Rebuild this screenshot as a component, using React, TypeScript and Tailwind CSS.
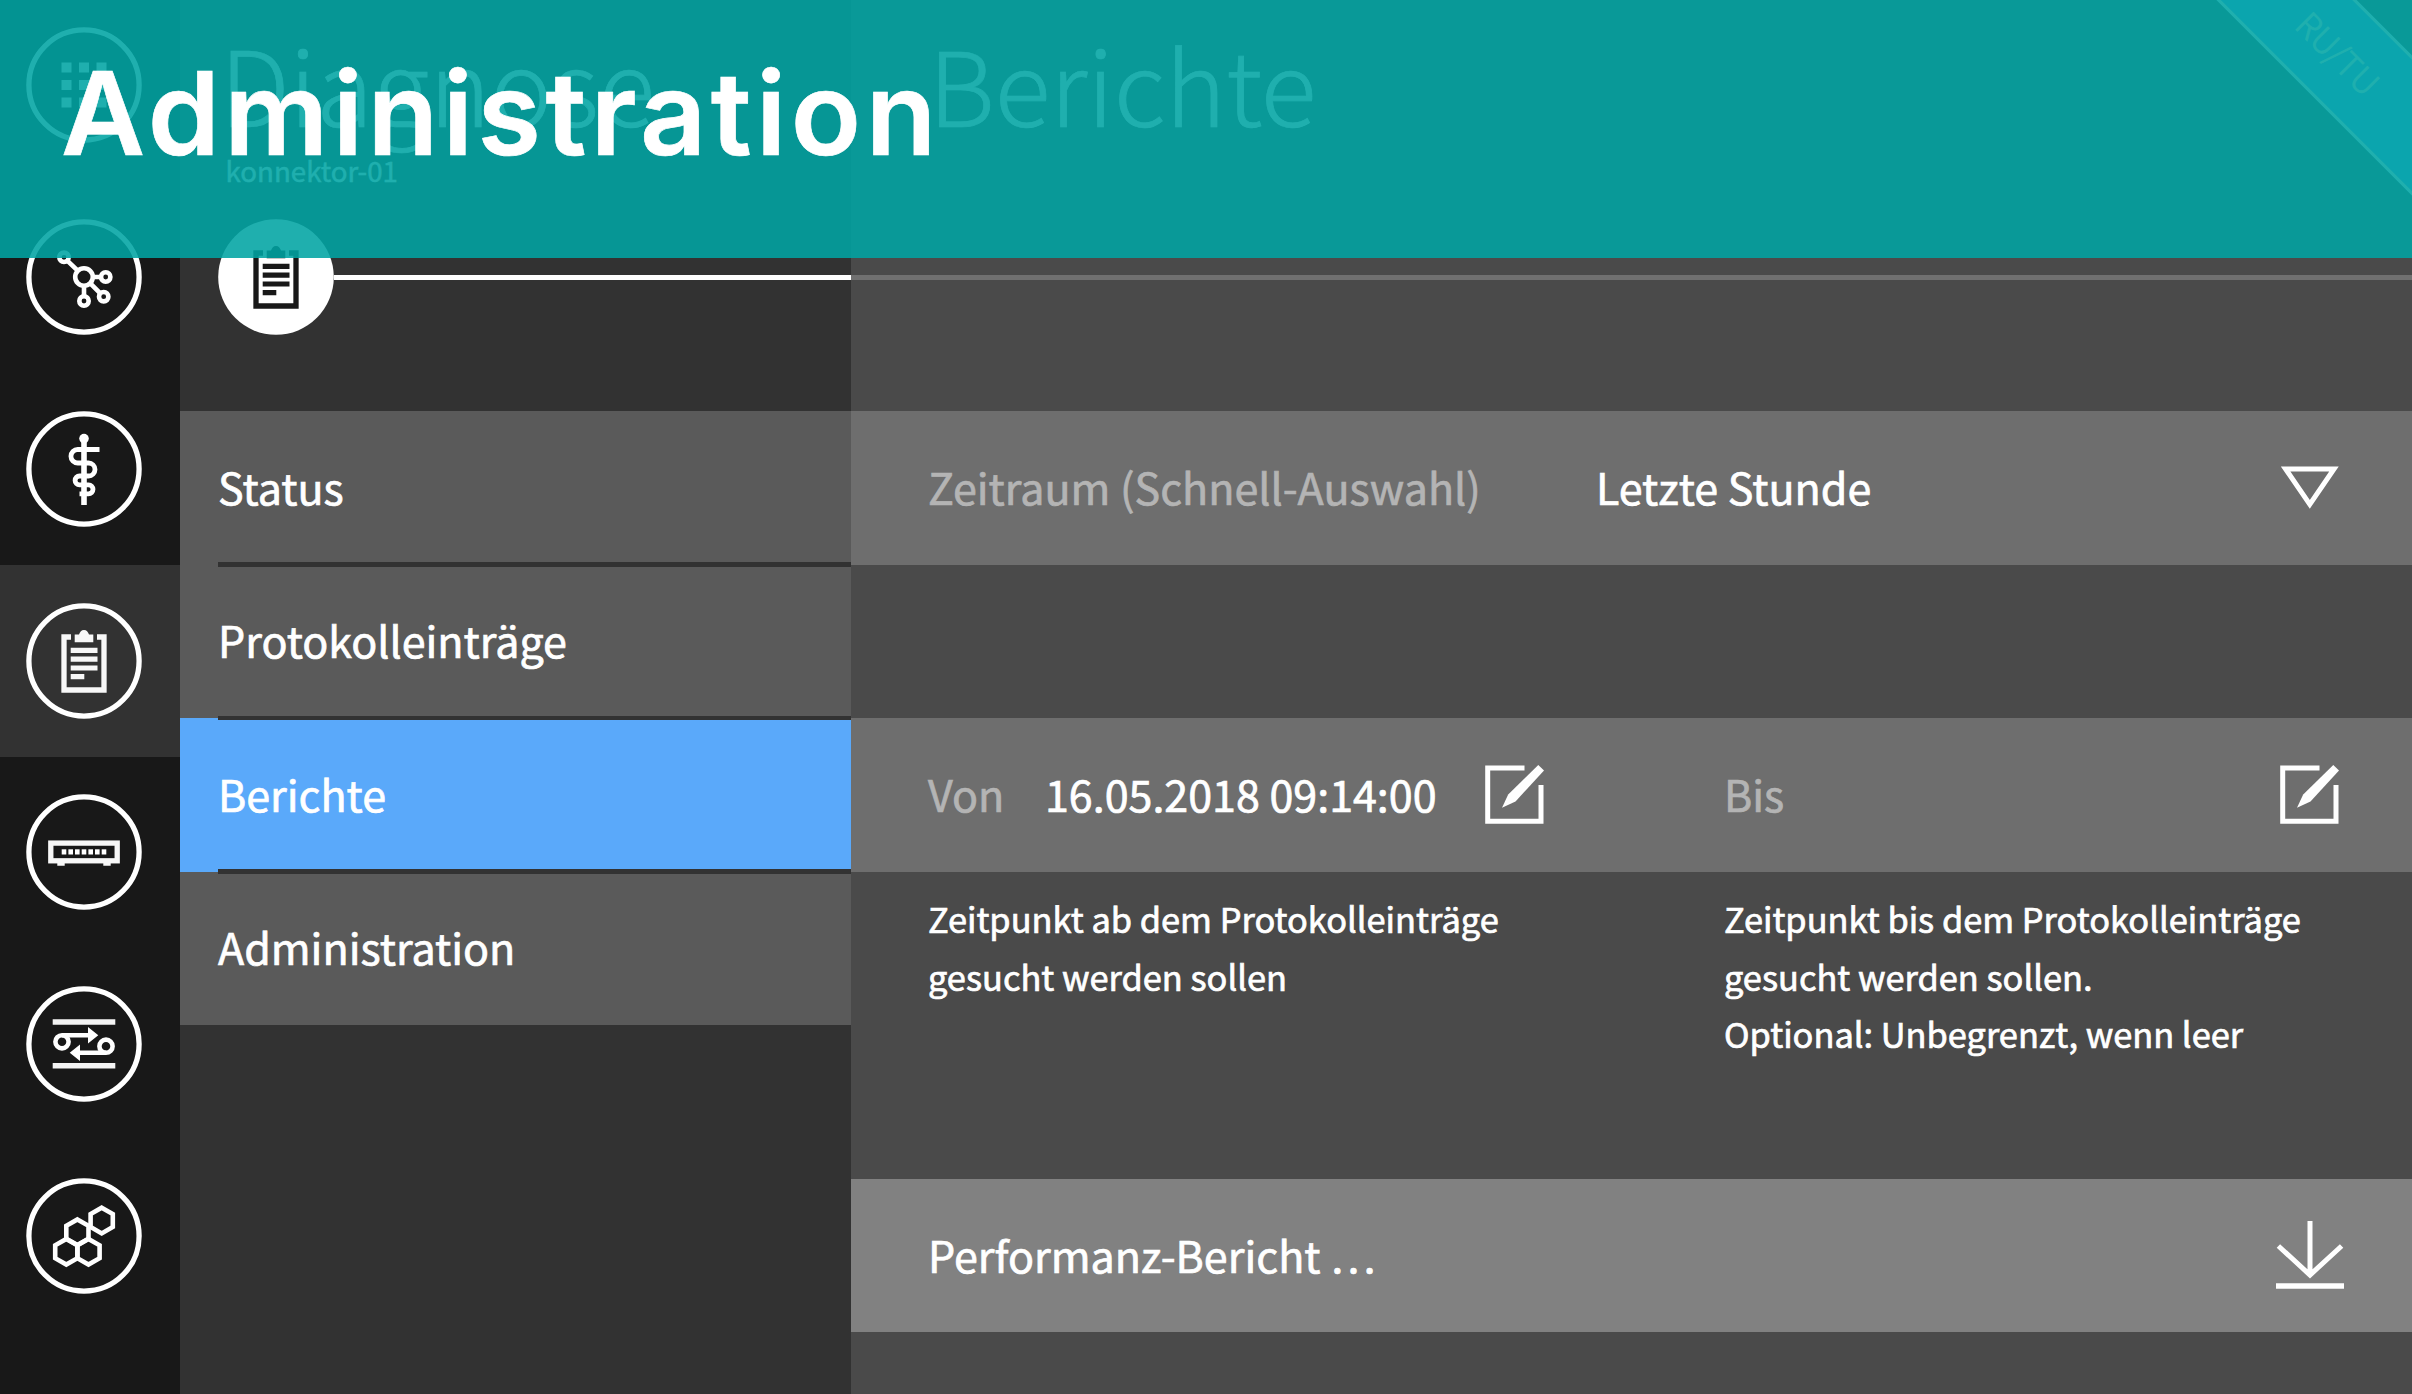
import type { ReactNode } from "react";

function Molecule() {
  return (
    <g fill="none" stroke="#fff" strokeWidth="4.6">
      <circle cx="0" cy="0" r="8.8" />
      <circle cx="-20" cy="-19.7" r="4.7" />
      <circle cx="21.7" cy="0" r="4.7" />
      <circle cx="19.7" cy="19.7" r="4.7" />
      <circle cx="0" cy="24" r="4.7" />
      <path d="M-16.5 -16.2 L-6.3 -6.3 M9 0 H17 M6.3 6.3 L16.3 16.3 M0 9 V19.5" />
    </g>
  );
}

function AppGrid() {
  const steps = [-17.5, 0, 17.5];
  return (
    <g fill="#fff">
      {steps.map((y) => steps.map((x) => <rect key={`${x}:${y}`} x={x - 5} y={y - 5} width="10" height="10" />))}
    </g>
  );
}

function Caduceus() {
  return (
    <g>
      <circle cx="0" cy="-30.4" r="4.8" fill="#fff" />
      <path d="M0 -30 V36" stroke="#fff" strokeWidth="5.6" />
      <path
        d="M15.5 -19.5 H-6.3 a6.75 6.75 0 0 0 0 13.5 H4.5 a6.5 6.5 0 0 1 0 13 H-4.5 a4.4 4.4 0 0 0 0 8.8 H4.5 a4.5 4.5 0 0 1 0 9 H-4.5"
        fill="none"
        stroke="#fff"
        strokeWidth="4.8"
      />
    </g>
  );
}

function Clipboard({ color = "#f7f7f7" }: { color?: string }) {
  return (
    <g>
      <path d="M-13 -24 H-20 V29 H20 V-24 H13" fill="none" stroke={color} strokeWidth="5.3" />
      <path d="M-9.3 -18.7 V-26.6 H-5 C-4 -29 -2.6 -31 0 -31 C2.6 -31 4 -29 5 -26.6 H9.3 V-18.7 Z" fill={color} />
      <path d="M-13.3 -10.7 H13.5 M-13.3 -1.9 H13.5 M-13.3 7 H13.5 M-13.3 15.7 H0.3" stroke={color} strokeWidth="5.2" />
    </g>
  );
}

function Router() {
  return (
    <g>
      <rect x="-33.2" y="-8.9" width="66.4" height="17.7" fill="none" stroke="#f7f7f7" strokeWidth="5.3" />
      {[-20, -13.3, -6.7, 0, 6.7, 13.3, 20].map((x) => (
        <rect key={x} x={x - 2.3} y="-2.7" width="4.6" height="5.2" fill="#fff" />
      ))}
      <path d="M-26.7 11 H-19.3 V13.8 H-26.7 Z M19.3 11 H26.7 V13.8 H19.3 Z" fill="#f7f7f7" />
    </g>
  );
}

function Flow() {
  return (
    <g fill="none" stroke="#fff" strokeWidth="4.6">
      <path d="M-31.3 -22 H31.3 M-31.3 21.7 H31.3" strokeWidth="5.4" stroke="#f4f4f4" />
      <circle cx="-22" cy="-2.2" r="6.6" />
      <circle cx="22" cy="2.2" r="6.6" />
      <path d="M-22 -8.8 H6 M22 8.8 H-6" />
      <path d="M4 -17 L14.3 -8.8 L4 -0.6 Z M-4 17 L-14.3 8.8 L-4 0.6 Z" fill="#fff" stroke="none" />
    </g>
  );
}

const HEX = "l11.1 6.4 v12.9 l-11.1 6.4 l-11.1 -6.4 v-12.9 Z";

function Hexagons() {
  return (
    <g fill="none" stroke="#fff" strokeWidth="4.6">
      <path d={`M17.7 -28.3 ${HEX}`} />
      <path d={`M-6.6 -16.6 ${HEX}`} />
      <path d={`M-17.7 2.9 ${HEX}`} />
      <path d={`M4.5 2.9 ${HEX}`} />
    </g>
  );
}

function CircleIcon({ children, filled = false }: { children: ReactNode; filled?: boolean }) {
  return (
    <svg viewBox="-58 -58 116 116" className="block size-[116px] shrink-0">
      {filled ? <circle r="57.8" fill="#fff" /> : <circle r="55.1" fill="none" stroke="#fff" strokeWidth="5.3" />}
      {children}
    </svg>
  );
}

function EditIcon() {
  return (
    <svg viewBox="0 0 59 60" className="block h-[60px] w-[59px]">
      <path d="M39.5 3 H2.7 V56.2 H56 V20" fill="none" stroke="#fff" strokeWidth="5" />
      <path d="M53.3 0 L59 5.6 L30.5 36.5 L17 42.8 L23.2 29.5 Z" fill="#fff" />
    </svg>
  );
}

const sidebar = [
  { name: "apps", icon: <AppGrid /> },
  { name: "network", icon: <Molecule /> },
  { name: "medical", icon: <Caduceus /> },
  { name: "reports", icon: <Clipboard />, active: true },
  { name: "router", icon: <Router /> },
  { name: "flow", icon: <Flow /> },
  { name: "modules", icon: <Hexagons /> },
];

const menu = [
  { label: "Status" },
  { label: "Protokolleinträge" },
  { label: "Berichte", active: true },
  { label: "Administration" },
];

export default function App() {
  return (
    <div className="relative flex h-[1394px] w-[2412px] overflow-hidden bg-[#4a4a4a] font-['Noto_Sans_CJK_SC',sans-serif] text-[43px] text-white [-webkit-text-stroke:0.7px]">
      <nav className="-mt-[10.7px] flex w-[180px] shrink-0 flex-col bg-[#181818]">
        {sidebar.map((s) => (
          <div
            key={s.name}
            className={`flex h-[191.8px] shrink-0 items-center pl-[26px] ${s.active ? "bg-[#323232]" : ""}`}
          >
            <CircleIcon>{s.icon}</CircleIcon>
          </div>
        ))}
      </nav>

      <aside className="flex w-[671.4px] shrink-0 flex-col bg-[#323232]">
        <header className="h-[411px] pl-[38px]">
          <h1 className="h-[155px] pl-[2px] text-[103.6px] leading-[164px] font-light">Diagnose</h1>
          <div className="h-[64px] pl-[7.5px] text-[27.7px] leading-[30px] [-webkit-text-stroke:0.4px]">konnektor-01</div>
          <div className="flex items-center">
            <CircleIcon filled>
              <Clipboard color="#181818" />
            </CircleIcon>
            <div className="h-[5px] flex-1 bg-white" />
          </div>
        </header>
        <ul>
          {menu.map((m, i) => (
            <li
              key={m.label}
              className={`relative flex h-[153.5px] items-center pl-[38px] ${m.active ? "bg-[#5aa9fa]" : "bg-[#5a5a5a]"}`}
            >
              {i > 0 && <span className="absolute -top-[2.4px] right-0 left-[38.4px] h-[4.8px] bg-[#323232]" />}
              <span className="-mt-[4px]">{m.label}</span>
            </li>
          ))}
        </ul>
      </aside>

      <main className="flex min-w-0 flex-1 flex-col">
        <header className="h-[411px]">
          <h1 className="h-[274.7px] pl-[77px] text-[103.2px] leading-[164px] font-light">Berichte</h1>
          <div className="h-[5px] bg-[#707070]" />
        </header>

        <div className="flex h-[153.5px] items-center bg-[#6e6e6e] pr-[73px] pl-[76.6px]">
          <span className="-mt-[3px] w-[668px] text-[#b4b4b4]">Zeitraum (Schnell-Auswahl)</span>
          <span className="-mt-[3px] flex-1">Letzte Stunde</span>
          <svg viewBox="0 0 58 44" className="block h-[44px] w-[58px]">
            <path d="M4.6 3 H53 L28.8 38.4 Z" fill="none" stroke="#fff" strokeWidth="5" />
          </svg>
        </div>

        <div className="mt-[153.5px] flex h-[153.5px] items-center bg-[#6e6e6e] pr-[73px] pl-[76.6px]">
          <div className="flex w-[796px] items-center">
            <span className="-mt-[3px] w-[117px] text-[#b4b4b4]">Von</span>
            <span className="-mt-[3px] w-[440px]">16.05.2018 09:14:00</span>
            <EditIcon />
          </div>
          <span className="-mt-[3px] flex-1 text-[#b4b4b4]">Bis</span>
          <EditIcon />
        </div>

        <div className="flex h-[307px] pt-[18.8px] pl-[76.6px] text-[34.4px] leading-[57.6px]">
          <p className="w-[796px]">
            Zeitpunkt ab dem Protokolleinträge
            <br />
            gesucht werden sollen
          </p>
          <p className="whitespace-nowrap">
            Zeitpunkt bis dem Protokolleinträge
            <br />
            gesucht werden sollen.
            <br />
            Optional: Unbegrenzt, wenn leer
          </p>
        </div>

        <div className="flex h-[153.5px] items-center justify-between bg-[#818181] pr-[68.4px] pl-[76.6px]">
          <span className="-mt-[3px]">Performanz-Bericht …</span>
          <svg viewBox="0 0 68 68" className="block size-[68px]">
            <path d="M34 0 V52 M2.4 25 L34 54 L65.6 25" fill="none" stroke="#fff" strokeWidth="5" />
            <path d="M0 65 H68" stroke="#fff" strokeWidth="5.4" />
          </svg>
        </div>
      </main>

      <div className="absolute top-[3px] left-[2139px] flex h-[99px] w-[400px] rotate-45 items-center justify-center border-y-[3px] border-white bg-[#5aa9fa] text-[34px] font-light">
        RU/TU
      </div>

      <div className="absolute inset-x-0 top-0 h-[258px] bg-[#00a4a3]/88 pl-[61px]">
        <div className="font-['Inter',sans-serif] text-[115.5px] leading-[226px] font-semibold tracking-[4.5px]">
          Administration
        </div>
      </div>
    </div>
  );
}
